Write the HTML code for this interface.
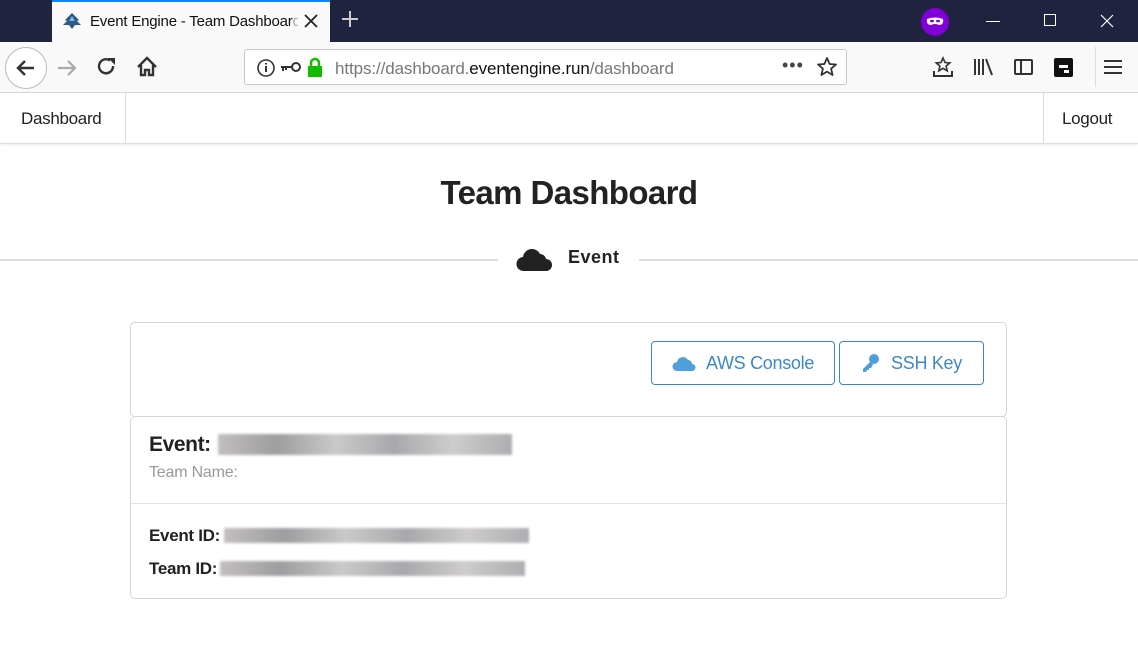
<!DOCTYPE html>
<html><head><meta charset="utf-8"><style>
*{box-sizing:border-box;margin:0;padding:0}
body{width:1138px;height:667px;overflow:hidden;background:#fff;font-family:"Liberation Sans",sans-serif;position:relative}
.abs{position:absolute}
.tabbar{left:0;top:0;width:1138px;height:42px;background:#202340}
.tab{left:52px;top:0;width:278px;height:42px;background:#f9f9fa;border-top:2px solid #0a84ff}
.toolbar{left:0;top:42px;width:1138px;height:51px;background:#f9f9fa;border-bottom:1px solid #d7d7db}
.url{left:244px;top:49px;width:603px;height:36px;background:#fff;border:1px solid #c8c8cc;border-radius:3px}
.nav{left:0;top:93px;width:1138px;height:51px;border-bottom:1px solid #ddd;box-shadow:0 1px 2px rgba(0,0,0,.08)}
.navtxt{font-size:17px;color:#222;top:109px}
.blur{background:linear-gradient(90deg,#b8b4b4,#8d8c8f 20%,#c2c0c0 40%,#9a9a9e 60%,#c6c3c3 80%,#a09fa3);filter:blur(1.2px);opacity:.85}
.btn{border:1px solid #3b88c8;border-radius:4px;color:#3b88c8;font-size:18px;display:flex;align-items:center;justify-content:center;gap:10px;height:44px;top:341px;letter-spacing:-.3px}
.lbl{font-weight:bold;font-size:17px;color:#222;letter-spacing:-.3px}
</style></head><body>
<div class="abs tabbar"></div>
<div class="abs tab"></div>
<svg class="abs" style="left:62px;top:12px" width="20" height="18"><path d="M10 1L3 8l2 1-4 4h6l3 4 3-4h6l-4-4 2-1z" fill="#2a5a8a"/><path d="M10 4l-3 5h6z" fill="#8ab4dd"/></svg>
<div class="abs" style="left:90px;top:13px;width:208px;overflow:hidden;white-space:nowrap;font-size:15px;color:#111;letter-spacing:-.2px">Event Engine - Team Dashboar<span style="color:#aaa">d</span></div>
<svg class="abs" style="left:304px;top:14px" width="14" height="14"><path d="M1 1l12 12M13 1L1 13" stroke="#222" stroke-width="1.8"/></svg>
<svg class="abs" style="left:342px;top:11px" width="16" height="16"><path d="M8 0v16M0 8h16" stroke="#ccc" stroke-width="2"/></svg>
<div class="abs" style="left:921px;top:8px;width:28px;height:28px;border-radius:50%;background:#8000d7"></div>
<svg class="abs" style="left:925px;top:16px" width="20" height="12"><path d="M2 3q8-3 16 0q1 6-4 6q-4-2-8 0q-5 0-4-6z" fill="#fff"/><ellipse cx="7" cy="5" rx="2" ry="1.3" fill="#8000d7"/><ellipse cx="13" cy="5" rx="2" ry="1.3" fill="#8000d7"/></svg>
<div class="abs" style="left:986px;top:21px;width:14px;height:1px;background:#fff"></div>
<div class="abs" style="left:1044px;top:14px;width:12px;height:12px;border:1px solid #fff"></div>
<svg class="abs" style="left:1100px;top:14px" width="14" height="14"><path d="M1 1l12 12M13 1L1 13" stroke="#fff" stroke-width="1.2"/></svg>
<div class="abs toolbar"></div>
<div class="abs" style="left:5px;top:47px;width:42px;height:42px;border:1px solid #bbb;border-radius:50%;background:#fff"></div>
<svg class="abs" style="left:14px;top:56px" width="24" height="24"><path d="M20 12H5M11 5l-7 7 7 7" stroke="#333" stroke-width="2.4" fill="none"/></svg>
<svg class="abs" style="left:55px;top:57px" width="24" height="22"><path d="M3 11h16M13 4l7 7-7 7" stroke="#aaa" stroke-width="2.2" fill="none"/></svg>
<svg class="abs" style="left:96px;top:56px" width="22" height="22"><path d="M17 10a7 7 0 1 1-3-5.5" stroke="#333" stroke-width="2.4" fill="none"/><path d="M12 2h7v7z" fill="#333"/></svg>
<svg class="abs" style="left:135px;top:55px" width="24" height="24"><path d="M3 12L12 3l9 9M6 10v10h4v-5h4v5h4V10" stroke="#333" stroke-width="2.4" fill="none"/></svg>
<div class="abs url"></div>
<svg class="abs" style="left:256px;top:58px" width="20" height="20"><circle cx="10" cy="10" r="8" stroke="#333" stroke-width="1.6" fill="none"/><path d="M10 8v6M10 5v1.5" stroke="#333" stroke-width="2"/></svg>
<svg class="abs" style="left:280px;top:60px" width="22" height="14"><circle cx="16" cy="7" r="4" stroke="#333" stroke-width="2" fill="none"/><path d="M1 7h11M3 7v4M6 7v3" stroke="#333" stroke-width="2"/></svg>
<svg class="abs" style="left:306px;top:56px" width="18" height="22"><path d="M5 10V7a4 4 0 0 1 8 0v3" stroke="#12bc00" stroke-width="2.5" fill="none"/><rect x="2" y="10" width="14" height="11" fill="#12bc00"/></svg>
<div class="abs" style="left:335px;top:59px;font-size:17px;color:#777;letter-spacing:-.1px">https://dashboard.<span style="color:#111">eventengine.run</span>/dashboard</div>
<div class="abs" style="left:782px;top:55px;font-size:18px;color:#444;letter-spacing:1px">•••</div>
<svg class="abs" style="left:816px;top:56px" width="22" height="22"><path d="M11 2l2.6 6 6.4.5-4.9 4.2 1.5 6.3L11 15.6 5.4 19l1.5-6.3L2 8.5 8.4 8z" stroke="#333" stroke-width="1.8" fill="none" stroke-linejoin="round"/></svg>
<svg class="abs" style="left:932px;top:56px" width="22" height="22"><path d="M11 2l2 4.5 4.8.4-3.7 3.2 1.1 4.7L11 12.3l-4.2 2.5 1.1-4.7-3.7-3.2L9 6.5z" stroke="#333" stroke-width="1.6" fill="none"/><path d="M2 15v5h18v-5" stroke="#333" stroke-width="2" fill="none"/></svg>
<svg class="abs" style="left:973px;top:57px" width="22" height="20"><path d="M2 2v16M6 2v16M10 2v16M13 2l6 16" stroke="#333" stroke-width="2"/></svg>
<div class="abs" style="left:1014px;top:59px;width:19px;height:16px;border:2px solid #333;border-radius:2px"><div style="width:6px;height:12px;border-right:2px solid #333"></div></div>
<div class="abs" style="left:1054px;top:58px;width:19px;height:19px;background:#111;border-radius:2px"><div style="position:absolute;left:5px;top:7px;width:9px;height:3px;background:#fff"></div><div style="position:absolute;left:10px;top:12px;width:5px;height:3px;background:#fff"></div></div>
<div class="abs" style="left:1095px;top:47px;width:1px;height:40px;background:#ddd"></div>
<svg class="abs" style="left:1104px;top:58px" width="18" height="18"><path d="M0 3h18M0 9h18M0 15h18" stroke="#333" stroke-width="2"/></svg>
<div class="abs nav"></div>
<div class="abs" style="left:125px;top:93px;width:1px;height:50px;background:#ddd"></div>
<div class="abs" style="left:1043px;top:93px;width:1px;height:50px;background:#ddd"></div>
<div class="abs navtxt" style="left:21px;letter-spacing:-.3px">Dashboard</div>
<div class="abs navtxt" style="left:1062px;letter-spacing:-.3px">Logout</div>
<div class="abs" style="left:0;top:174px;width:1138px;text-align:center;font-size:33px;font-weight:bold;color:#222;letter-spacing:-.6px">Team Dashboard</div>
<div class="abs" style="left:0;top:259px;width:498px;height:2px;background:#ddd"></div>
<div class="abs" style="left:639px;top:259px;width:499px;height:2px;background:#ddd"></div>
<svg class="abs" style="left:516px;top:245px" width="37" height="27"><path d="M8 26a7 7 0 0 1-1-14 9 9 0 0 1 17-3 6 6 0 0 1 6 5 6 6 0 0 1 0 12z" fill="#222"/></svg>
<div class="abs" style="left:568px;top:247px;font-size:18px;font-weight:bold;color:#222;letter-spacing:.5px">Event</div>
<div class="abs" style="left:130px;top:322px;width:877px;height:95px;border:1px solid #d6d6d6;border-radius:5px"></div>
<div class="abs btn" style="left:651px;width:184px"><svg width="24" height="17"><path d="M5 16a4.5 4.5 0 0 1 0-9 6 6 0 0 1 11-2 4 4 0 0 1 4 4 3.5 3.5 0 0 1 0 7z" fill="#4f9fdb"/></svg>AWS Console</div>
<div class="abs btn" style="left:839px;width:145px"><svg width="20" height="20"><circle cx="13" cy="6" r="5" fill="#4f9fdb"/><path d="M10 8L2 16v3h3l1-2h2v-2h2l2-3z" fill="#4f9fdb"/></svg>SSH Key</div>
<div class="abs" style="left:130px;top:416px;width:877px;height:183px;border:1px solid #d6d6d6;border-radius:5px"></div>
<div class="abs" style="left:131px;top:503px;width:875px;height:1px;background:#e3e3e3"></div>
<div class="abs" style="left:149px;top:433px;font-size:21px;font-weight:bold;color:#222;letter-spacing:-.4px">Event:</div>
<div class="abs blur" style="left:218px;top:434px;width:294px;height:21px"></div>
<div class="abs" style="left:149px;top:464px;font-size:16px;color:#999;letter-spacing:-.2px">Team Name:</div>
<div class="abs lbl" style="left:149px;top:526px">Event ID:</div>
<div class="abs blur" style="left:224px;top:528px;width:305px;height:15px"></div>
<div class="abs lbl" style="left:149px;top:559px">Team ID:</div>
<div class="abs blur" style="left:220px;top:561px;width:305px;height:15px"></div>
</body></html>
